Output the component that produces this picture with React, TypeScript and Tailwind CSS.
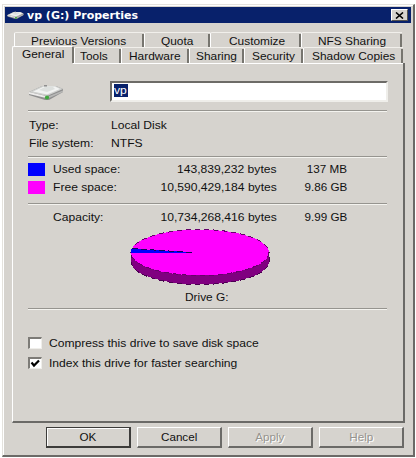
import React from 'react';
import clsx from 'clsx';

const backTabs = [
    { text: 'Previous Versions', width: 'w-[130px]', pad: 'pl-[16px]' },
    { text: 'Quota', width: 'w-[66px]', pad: 'pl-[16px]' },
    { text: 'Customize', width: 'w-[91px]', pad: 'pl-[18px]' },
    { text: 'NFS Sharing', width: 'w-[101px]', pad: 'pl-[16px]' },
];

const frontTabs = [
    { text: 'Tools', width: 'w-[47px]', pad: 'pl-[5px]' },
    { text: 'Hardware', width: 'w-[68px]', pad: 'pl-[7px]' },
    { text: 'Sharing', width: 'w-[55px]', pad: 'pl-[6px]' },
    { text: 'Security', width: 'w-[59px]', pad: 'pl-[7px]' },
    { text: 'Shadow Copies', width: 'w-[100px]', pad: 'pl-[8px]' },
];

const buttons = [
    { text: 'OK', primary: true },
    { text: 'Cancel' },
    { text: 'Apply', disabled: true },
    { text: 'Help', disabled: true },
];

// Wide bitmap-like lettering
function Label({ children, className = 'origin-left scale-x-[1.1]' }: { children: React.ReactNode; className?: string }) {
    return <span className={clsx('inline-block whitespace-nowrap', className)}>{children}</span>;
}

function Tab({ text, width, pad }: { text: string; width: string; pad: string }) {
    return (
        <div className={clsx('flex h-[16px] items-center rounded-tl-[2px] border-t border-l border-t-[#f1efeb] border-l-white', width, pad)}>
            <Label className="origin-left scale-x-[1.08] pt-[2px]">{text}</Label>
            <div className="mt-[1px] ml-auto h-[14px] w-[2px] shrink-0 bg-[#77756f]" />
        </div>
    );
}

function Separator({ className }: { className: string }) {
    return <div className={clsx('h-[2px] w-[359px] border-t border-b border-t-[#96948f] border-b-[#f4f3ef]', className)} />;
}

function DriveIcon({ className }: { className: string }) {
    return (
        <svg viewBox="0 0 36 18" className={className} preserveAspectRatio="none">
            <path d="M1 8 14 2h14l7 3v3L21 16h-4L1 11z" fill="#8f8f8f" />
            <path d="M1 8 14 2h14l7 3-16 7z" fill="#cfd0ce" />
            <path d="m5 7.5 11-5h11l5 2.5-13 5.5z" fill="#f2f3f2" />
            <path d="m11 6 6-3h8l2 2-8 3z" fill="#dde0de" />
            <path d="M16 2.5V1h3v1.5z" fill="#8f8f8f" />
            <path d="m1 8 17 4v2L1 10z" fill="#ecebea" />
            <path d="m20 12.5 15-6V8l-15 6.5z" fill="#b8b8b7" />
            <circle cx="19" cy="13.5" r="2.1" fill="#3fa83c" />
        </svg>
    );
}

function UsageRow({ color, name, bytes, size }: { color?: string; name: string; bytes: string; size: string }) {
    return (
        <div className="flex h-[14px] items-center">
            <div className={clsx('h-[13px] w-[17px]', color)} />
            <div className="ml-[8px] w-[84px]"><Label>{name}</Label></div>
            <div className="w-[140px] text-right"><Label className="origin-right scale-x-[1.1]">{bytes}</Label></div>
            <div className="w-[70px] text-right"><Label className="origin-right scale-x-[1.06]">{size}</Label></div>
        </div>
    );
}

function Pie() {
    return (
        <svg viewBox="0 0 140 57" className="h-[57px] w-[140px]" shapeRendering="crispEdges">
            <path d="M1 23.5v9a69 23 0 0 0 138 0v-9z" fill="#800080" stroke="#4a0050" strokeWidth="1" strokeDasharray="5 4" />
            <ellipse cx="70" cy="23.5" rx="69" ry="23" fill="#ff00ff" />
            <ellipse cx="70" cy="23.5" rx="69" ry="23" fill="none" stroke="#66006b" strokeWidth="1" strokeDasharray="5 4" />
            <path d="M62 23.5H1v-4z" fill="#0000ff" />
            <path d="M62 23.5 1 19.5" stroke="#15005c" strokeWidth="1" strokeDasharray="6 3" />
        </svg>
    );
}

function CheckRow({ text, checked }: { text: string; checked?: boolean }) {
    return (
        <div className="flex h-[12px] items-center">
            <div className="mr-[7px] h-[12px] w-[14px] border-t-2 border-l-2 border-r border-b border-t-[#7d7b77] border-l-[#7d7b77] border-r-[#efeeea] border-b-[#efeeea] bg-white">
                {checked && (
                    <svg viewBox="0 0 11 9" className="h-[9px] w-[11px]">
                        <path d="m1.5 3.5 2.5 3 5-5" fill="none" stroke="#000" strokeWidth="2.2" />
                    </svg>
                )}
            </div>
            <Label>{text}</Label>
        </div>
    );
}

export default function App() {
    return (
        <div className="h-[458px] w-[416px] overflow-hidden bg-white pt-[4px] pl-[2px] font-['Liberation_Sans',sans-serif] text-[11px] leading-[13px] text-[#111]">
            <div className="h-[453px] w-[413px] border-t border-l border-r-2 border-b-2 border-t-[#e4e2dd] border-l-[#e4e2dd] border-r-[#6b6a67] border-b-[#6b6a67] bg-[#d6d3ce] shadow-[inset_1px_1px_0_#fff]">
                {/* Title bar */}
                <div className="mt-[2px] ml-[2px] flex h-[16px] w-[406px] items-center bg-[#08216b] text-white">
                    <DriveIcon className="ml-[2px] h-[9px] w-[17px]" />
                    <span className="ml-[3px] inline-block origin-left scale-x-[1.1] font-['DejaVu_Sans',sans-serif] text-[10px] font-bold whitespace-nowrap">vp (G:) Properties</span>
                    <button className="mr-[3px] ml-auto flex h-[12px] w-[17px] items-center justify-center border-t border-l border-r border-b border-t-white border-l-white border-r-[#55534f] border-b-[#55534f] bg-[#d6d3ce]">
                        <svg viewBox="0 0 9 7" className="h-[7px] w-[9px]">
                            <path d="m1 .5 7 6m0-6-7 6" stroke="#000" strokeWidth="1.6" />
                        </svg>
                    </button>
                </div>

                {/* Tabs */}
                <div className="mt-[9px] ml-[11px] flex h-[14px]">
                    {backTabs.map((tab) => <Tab key={tab.text} {...tab} />)}
                </div>
                <div className="relative ml-[9px] flex h-[17px] items-end">
                    <div className="flex h-[17px] w-[62px] items-center rounded-t-[2px] border-t border-l border-r-2 border-t-white border-l-white border-r-[#77756f] bg-[#d6d3ce] pb-[2px] pl-[9px]">
                        <Label className="origin-left scale-x-[1.08]">General</Label>
                    </div>
                    {frontTabs.map((tab) => (
                        <div key={tab.text} className="bg-[#d6d3ce]"><Tab {...tab} /></div>
                    ))}
                </div>

                {/* General page */}
                <div className="ml-[9px] h-[360px] w-[393px] border-l border-r-2 border-b-2 border-l-white border-r-[#6b6a67] border-b-[#6b6a67] pl-[15px]">
                    <div className="ml-[45px] h-px w-[330px] bg-white" />
                    <div className="flex h-[38px] items-end">
                        <DriveIcon className="h-[18px] w-[36px]" />
                        <div className="ml-[46px] h-[21px] w-[278px] border-t-2 border-l-2 border-r-2 border-b-2 border-t-[#6d6b67] border-l-[#6d6b67] border-r-[#efeeea] border-b-[#efeeea] bg-white pt-px pl-[2px]">
                            <div className="h-[13px] w-[14px] bg-[#08216b] leading-[12px] text-white"><Label>vp</Label></div>
                        </div>
                    </div>
                    <Separator className="mt-[8px]" />
                    <div className="mt-[7px] flex h-[13px]">
                        <div className="w-[83px] pl-px"><Label>Type:</Label></div>
                        <Label>Local Disk</Label>
                    </div>
                    <div className="mt-[5px] flex h-[13px]">
                        <div className="w-[83px] pl-px"><Label>File system:</Label></div>
                        <Label>NTFS</Label>
                    </div>
                    <Separator className="mt-[6px]" />
                    <div className="mt-[4px] flex flex-col gap-[4px]">
                        <UsageRow color="bg-[#0000ff]" name="Used space:" bytes="143,839,232 bytes" size="137 MB" />
                        <UsageRow color="bg-[#ff00ff]" name="Free space:" bytes="10,590,429,184 bytes" size="9.86 GB" />
                    </div>
                    <Separator className="mt-[9px]" />
                    <div className="mt-[5px]">
                        <UsageRow name="Capacity:" bytes="10,734,268,416 bytes" size="9.99 GB" />
                    </div>
                    <div className="mt-[5px] ml-[102px]"><Pie /></div>
                    <div className="mt-[5px] ml-[157px] h-[13px]"><Label className="origin-left scale-x-[1.08]">Drive G:</Label></div>
                    <Separator className="mt-[4px]" />
                    <div className="mt-[27px] flex flex-col gap-[8px]">
                        <CheckRow text="Compress this drive to save disk space" />
                        <CheckRow text="Index this drive for faster searching" checked />
                    </div>
                </div>

                {/* Buttons */}
                <div className="mt-[4px] ml-[43px] flex gap-[6px]">
                    {buttons.map((button) => (
                        <button
                            key={button.text}
                            className={clsx(
                                'flex h-[21px] w-[85px] items-center justify-center',
                                button.primary
                                    ? 'border border-r-2 border-b-2 border-[#3d3c3a] shadow-[inset_1px_1px_0_#fff]'
                                    : 'border-t border-l border-r-2 border-b-2 border-t-white border-l-white border-r-[#6b6a67] border-b-[#6b6a67]',
                                button.disabled && 'text-[#96948f] [text-shadow:1px_1px_0_#fff]'
                            )}
                        >
                            <Label className="origin-center scale-x-[1.06]">{button.text}</Label>
                        </button>
                    ))}
                </div>
            </div>
        </div>
    );
}
